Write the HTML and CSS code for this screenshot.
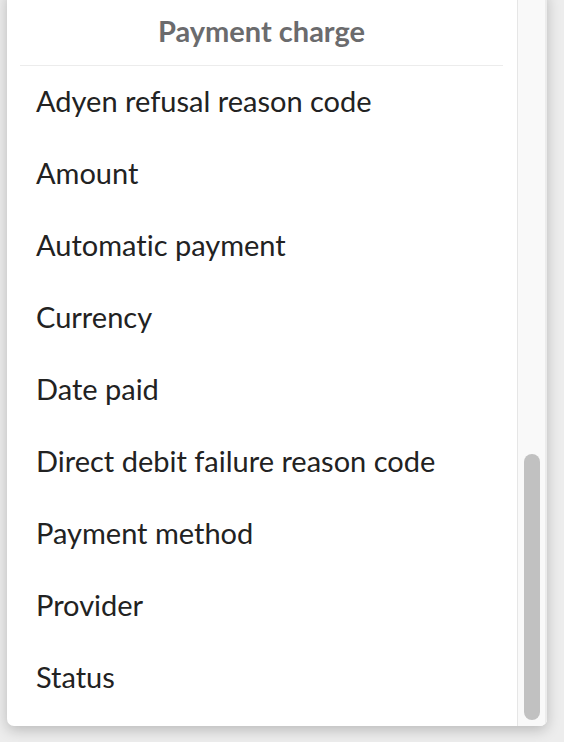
FILE: index.html
```html
<!DOCTYPE html>
<html lang="en">
<head>
<meta charset="utf-8">
<title>Payment charge</title>
<link rel="stylesheet" href="styles.css">
</head>
<body>
<div class="panel">
  <div class="content">
    <div class="header">Payment charge</div>
    <ul class="list">
      <li class="item">Adyen refusal reason code</li>
      <li class="item">Amount</li>
      <li class="item">Automatic payment</li>
      <li class="item">Currency</li>
      <li class="item">Date paid</li>
      <li class="item">Direct debit failure reason code</li>
      <li class="item">Payment method</li>
      <li class="item">Provider</li>
      <li class="item">Status</li>
    </ul>
  </div>
  <div class="track"><div class="thumb"></div></div>
</div>
</body>
</html>
```

FILE: styles.css
```css
html, body {
  margin: 0;
  padding: 0;
}
body {
  background: #ededed;
  width: 564px;
  height: 742px;
  overflow: hidden;
  font-family: Lato, "Open Sans", sans-serif;
  font-variant-ligatures: none;
}
.panel {
  box-sizing: border-box;
  width: 540px;
  height: 736px;
  margin: -10px 0 0 7px;
  background: #fff;
  border-radius: 7px;
  box-shadow: 0 4px 14px rgba(0, 0, 0, 0.22);
  display: flex;
  overflow: hidden;
}
.content {
  flex: 1;
  padding: 10px 14px 0 13px;
}
.header {
  box-sizing: border-box;
  height: 66px;
  padding-bottom: 5px;
  border-bottom: 1px solid #ececec;
  display: flex;
  align-items: center;
  justify-content: center;
  font-weight: 700;
  font-size: 29px;
  color: #6b6b6d;
}
.list {
  list-style: none;
  margin: 0;
  padding: 0;
}
.item {
  box-sizing: border-box;
  height: 72px;
  padding: 0 0 4px 16px;
  display: flex;
  align-items: center;
  font-size: 29px;
  color: #222;
}
.track {
  box-sizing: border-box;
  width: 30px;
  background: #f9f9f9;
  border-left: 1px solid #e6e6e6;
  border-right: 2px solid #ececec;
  display: flex;
  flex-direction: column;
  justify-content: flex-end;
  align-items: center;
  padding-bottom: 6px;
}
.thumb {
  width: 16px;
  height: 266px;
  border-radius: 8px;
  background: #c1c1c1;
}
```
